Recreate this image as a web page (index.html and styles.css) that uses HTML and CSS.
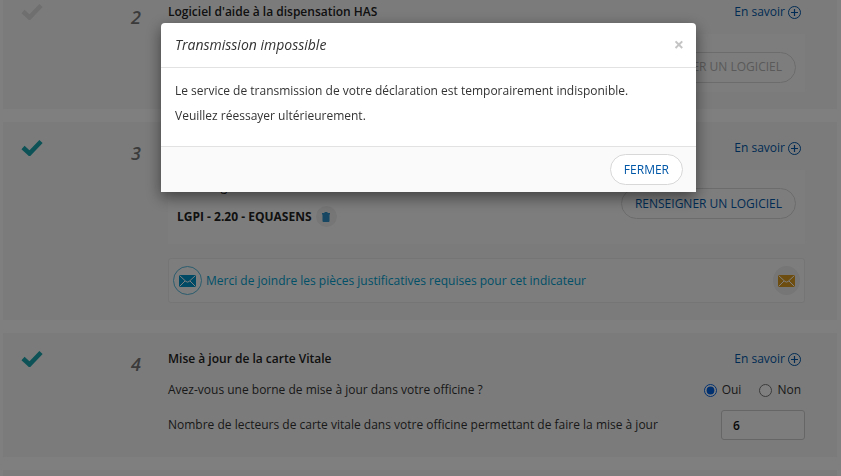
FILE: index.html
```html
<!DOCTYPE html>
<html lang="fr">
<head>
<meta charset="utf-8">
<title>Transmission impossible</title>
<link rel="stylesheet" href="styles.css">
</head>
<body>
<svg class="sprite" aria-hidden="true">
  <symbol id="check" viewBox="0 0 22 17"><path d="M2 8.500L8.500 14.500L20 2.500" fill="none" stroke="currentColor" stroke-width="4.600"/></symbol>
  <symbol id="plus" viewBox="0 0 13 13"><circle cx="6.500" cy="6.500" r="6" fill="none" stroke="currentColor"/><path d="M6.500 3v7M3 6.500h7" stroke="currentColor" stroke-width="1.200"/></symbol>
  <symbol id="mail" viewBox="0 0 17 12"><path d="M0 0h17v12H0z" fill="currentColor"/><path d="M.5.5L7 6.500q1.500 1.200 3 0L16.500.5M.5 11.500L6 6M16.500 11.500L11 6" fill="none" stroke="#fff"/></symbol>
  <symbol id="trash" viewBox="0 0 8 10"><path d="M0 1h2.500V0h3v1H8v1.500H0zM.5 2h7v7q0 1-1 1h-5q-1 0-1-1z" fill="currentColor"/></symbol>
</svg>
<main class="page">
  <section class="card card-first">
    <svg class="check check-off"><use href="#check"/></svg>
    <span class="number">2</span>
    <div class="content">
      <header class="head"><h2>Logiciel d'aide à la dispensation HAS</h2><a class="more" href="#">En savoir <svg><use href="#plus"/></svg></a></header>
      <div class="panel panel-short"><button class="pill" type="button" disabled>RENSEIGNER UN LOGICIEL</button></div>
    </div>
  </section>
  <section class="card">
    <svg class="check"><use href="#check"/></svg>
    <span class="number">3</span>
    <div class="content">
      <header class="head"><h2>Logiciel référencé</h2><a class="more" href="#">En savoir <svg><use href="#plus"/></svg></a></header>
      <div class="panel">
        <div class="software">
          <p>Votre logiciel</p>
          <div class="software-name"><strong>LGPI - 2.20 - EQUASENS</strong><button class="delete" type="button" aria-label="Supprimer"><svg><use href="#trash"/></svg></button></div>
        </div>
        <button class="pill" type="button">RENSEIGNER UN LOGICIEL</button>
      </div>
      <div class="notice">
        <span class="round"><svg><use href="#mail"/></svg></span>
        <p>Merci de joindre les pièces justificatives requises pour cet indicateur</p>
        <button class="round round-warn" type="button" aria-label="Joindre"><svg><use href="#mail"/></svg></button>
      </div>
    </div>
  </section>
  <section class="card">
    <svg class="check"><use href="#check"/></svg>
    <span class="number">4</span>
    <div class="content">
      <header class="head"><h2>Mise à jour de la carte Vitale</h2><a class="more" href="#">En savoir <svg><use href="#plus"/></svg></a></header>
      <div class="row">
        <span>Avez-vous une borne de mise à jour dans votre officine ?</span>
        <div class="choices"><label><input type="radio" name="borne" checked>Oui</label><label><input type="radio" name="borne">Non</label></div>
      </div>
      <div class="row">
        <label for="readers">Nombre de lecteurs de carte vitale dans votre officine permettant de faire la mise à jour</label>
        <input class="count" id="readers" type="text" value="6">
      </div>
    </div>
  </section>
  <section class="card card-next"></section>
</main>
<div class="backdrop">
  <div class="modal" role="dialog" aria-modal="true" aria-labelledby="modal-title">
    <header class="modal-head"><h1 id="modal-title">Transmission impossible</h1><button class="close" type="button" aria-label="Fermer">×</button></header>
    <div class="modal-body"><p>Le service de transmission de votre déclaration est temporairement indisponible.</p><p>Veuillez réessayer ultérieurement.</p></div>
    <footer class="modal-foot"><button class="pill" type="button">FERMER</button></footer>
  </div>
</div>
</body>
</html>
```
FILE: styles.css
```css
* { box-sizing: border-box; }
html, body { height: 100%; }
body {
  margin: 0;
  overflow: hidden;
  background: #fff;
  color: #333;
  font: 12px/22px "Open Sans", "Noto Sans", sans-serif;
}
h1, h2, p { margin: 0; }
button, input { font: inherit; }
.sprite { display: none; }

.page {
  display: flex;
  flex-direction: column;
  gap: 13px;
  height: 100%;
  padding: 0 4px 0 3px;
}
.card {
  display: grid;
  flex: none;
  grid-template-columns: 110px 55px 1fr;
  align-items: start;
  padding: 15px 32px 17px 0;
  background: #f7f7f7;
}
.card-first { padding-top: 1px; }
.card-next { flex: 1; padding: 0; }
.check {
  width: 22px;
  height: 17px;
  margin: 2px 0 0 18px;
  color: #1ba5ad;
}
.check-off { color: #dedede; }
.number {
  padding: 5px 0 0 18px;
  color: #777;
  font-size: 18px;
  font-style: italic;
  font-weight: 600;
}
.head {
  display: flex;
  justify-content: space-between;
  padding-right: 4px;
}
.head h2 {
  color: #222;
  font-size: 12px;
  font-weight: 600;
}
.more {
  display: flex;
  align-items: center;
  gap: 3px;
  color: #0057a8;
  text-decoration: none;
}
.more svg { width: 13px; height: 13px; }

.panel {
  display: flex;
  justify-content: space-between;
  align-items: center;
  min-height: 74px;
  margin-top: 11px;
  padding: 0 9px 7px;
  background: #fbfbfb;
}
.panel-short { min-height: 58px; padding: 8px 9px 0; }
.panel .pill { margin-left: auto; }
.software { padding-bottom: 4px; }
.software p { margin-bottom: 8px; color: #222; }
.software-name { display: flex; align-items: center; gap: 4px; }
.software-name strong { color: #222; font-weight: 700; }
.delete {
  display: grid;
  place-items: center;
  width: 21px;
  height: 21px;
  padding: 0;
  border: 0;
  border-radius: 50%;
  background: #ececec;
  color: #2f8fc4;
}
.delete svg { width: 8px; height: 10px; }
.pill {
  height: 31px;
  padding: 0 13px;
  border: 1px solid #d8d8d8;
  border-radius: 16px;
  background: #fff;
  color: #0057a8;
}
.panel .pill { background: transparent; }
.pill:disabled { color: #b4b4b4; }

.notice {
  display: flex;
  align-items: center;
  gap: 4px;
  margin-top: 14px;
  padding: 7px 4px;
  border: 1px solid #eaeaea;
  border-radius: 3px;
  background: #fbfbfb;
  color: #00a0d0;
}
.notice p { flex: 1; }
.round {
  display: grid;
  place-items: center;
  width: 29px;
  height: 29px;
  padding: 0;
  border: 1px solid #55b8da;
  border-radius: 50%;
  color: #0094cc;
}
.round svg { width: 17px; height: 12px; }
.round-warn { width: 27px; border: 0; background: #ececec; color: #dc9c20; }

.row {
  display: flex;
  justify-content: space-between;
  align-items: center;
  min-height: 30px;
  margin-top: 5px;
}
.choices { display: flex; gap: 18px; padding-right: 4px; }
.choices label { display: flex; align-items: center; gap: 5px; }
.choices input { width: 13px; height: 13px; margin: 0; accent-color: #0060df; }
.count {
  width: 84px;
  height: 30px;
  padding: 0 11px;
  border: 1px solid #ccc;
  border-radius: 3px;
  background: #fbfbfb;
  color: #111;
  font-weight: 600;
}

.backdrop {
  position: fixed;
  inset: 0;
  padding: 23px 145px 0 161px;
  background: rgba(0, 0, 0, .5);
}
.modal {
  overflow: hidden;
  border-radius: 4px 4px 0 0;
  background: #fff;
  box-shadow: 0 5px 15px rgba(0, 0, 0, .5);
}
.modal-head {
  display: flex;
  justify-content: space-between;
  align-items: center;
  height: 45px;
  padding: 0 12px 0 14px;
  border-bottom: 1px solid #e2e2e2;
}
.modal-head h1 { font-size: 14px; font-style: italic; font-weight: 400; }
.close {
  padding: 0 0 2px;
  border: 0;
  background: none;
  color: #c4c4c4;
  font-size: 18px;
  font-weight: 700;
}
.modal-body { padding: 10px 14px 18px; line-height: 25px; }
.modal-foot {
  display: flex;
  justify-content: flex-end;
  padding: 7px 13px;
  border-top: 1px solid #e2e2e2;
  background: #fafafa;
}
```
